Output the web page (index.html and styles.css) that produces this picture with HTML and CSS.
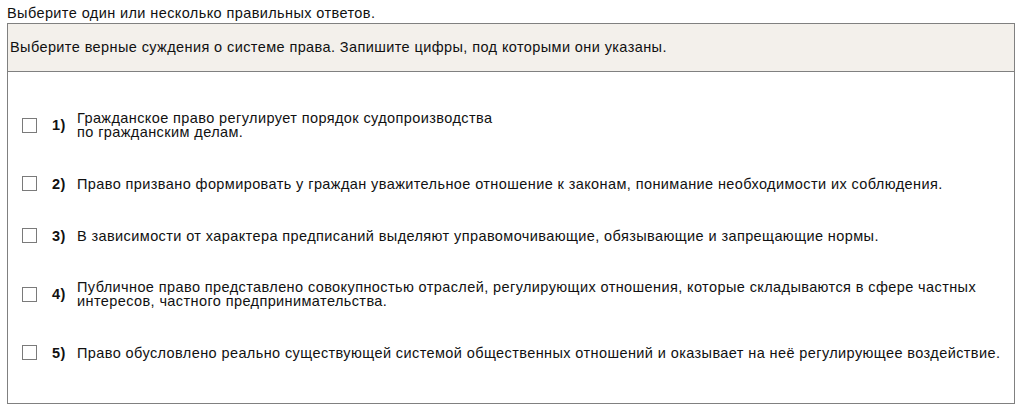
FILE: index.html
```html
<!DOCTYPE html>
<html lang="ru">
<head>
<meta charset="utf-8">
<link rel="stylesheet" href="styles.css">
</head>
<body>
<div class="instruction">Выберите один или несколько правильных ответов.</div>
<div class="task">
  <div class="task-head">Выберите верные суждения о системе права. Запишите цифры, под которыми они указаны.</div>
  <div class="options">
    <div class="option">
      <span class="check"></span>
      <span class="num">1)</span>
      <span class="text">Гражданское право регулирует порядок судопроизводства<br>по гражданским делам.</span>
    </div>
    <div class="option">
      <span class="check"></span>
      <span class="num">2)</span>
      <span class="text">Право призвано формировать у граждан уважительное отношение к законам, понимание необходимости их соблюдения.</span>
    </div>
    <div class="option">
      <span class="check"></span>
      <span class="num">3)</span>
      <span class="text">В зависимости от характера предписаний выделяют управомочивающие, обязывающие и запрещающие нормы.</span>
    </div>
    <div class="option">
      <span class="check"></span>
      <span class="num">4)</span>
      <span class="text">Публичное право представлено совокупностью отраслей, регулирующих отношения, которые складываются в сфере частных интересов, частного предпринимательства.</span>
    </div>
    <div class="option">
      <span class="check"></span>
      <span class="num">5)</span>
      <span class="text">Право обусловлено реально существующей системой общественных отношений и оказывает на неё регулирующее воздействие.</span>
    </div>
  </div>
</div>
</body>
</html>
```
FILE: styles.css
```css
html, body {
  margin: 0;
  padding: 0;
  background: #ffffff;
}
body {
  font-family: "Liberation Sans", Arial, Helvetica, sans-serif;
  font-size: 14.5px;
  letter-spacing: 0.4px;
  line-height: 15px;
  color: #111111;
  padding: 6px 9px 0 7px;
}
.instruction {
  margin-bottom: 2px;
}
.task {
  border: 1px solid #808080;
}
.task-head {
  background: #f3f0eb;
  border-bottom: 1px solid #808080;
  padding: 16px 8px 16px 2px;
}
.options {
  padding: 20px 10px 25px 14px;
}
.option {
  display: flex;
  align-items: center;
  padding: 19px 0 18px;
}
.check {
  flex: none;
  width: 15px;
  height: 15px;
  box-sizing: border-box;
  border: 1px solid #7a7a7a;
  background: #fff;
}
.num {
  flex: none;
  font-weight: bold;
  line-height: 14px;
  margin-left: 15px;
  width: 25px;
}
.text {
  line-height: 14px;
}
```
